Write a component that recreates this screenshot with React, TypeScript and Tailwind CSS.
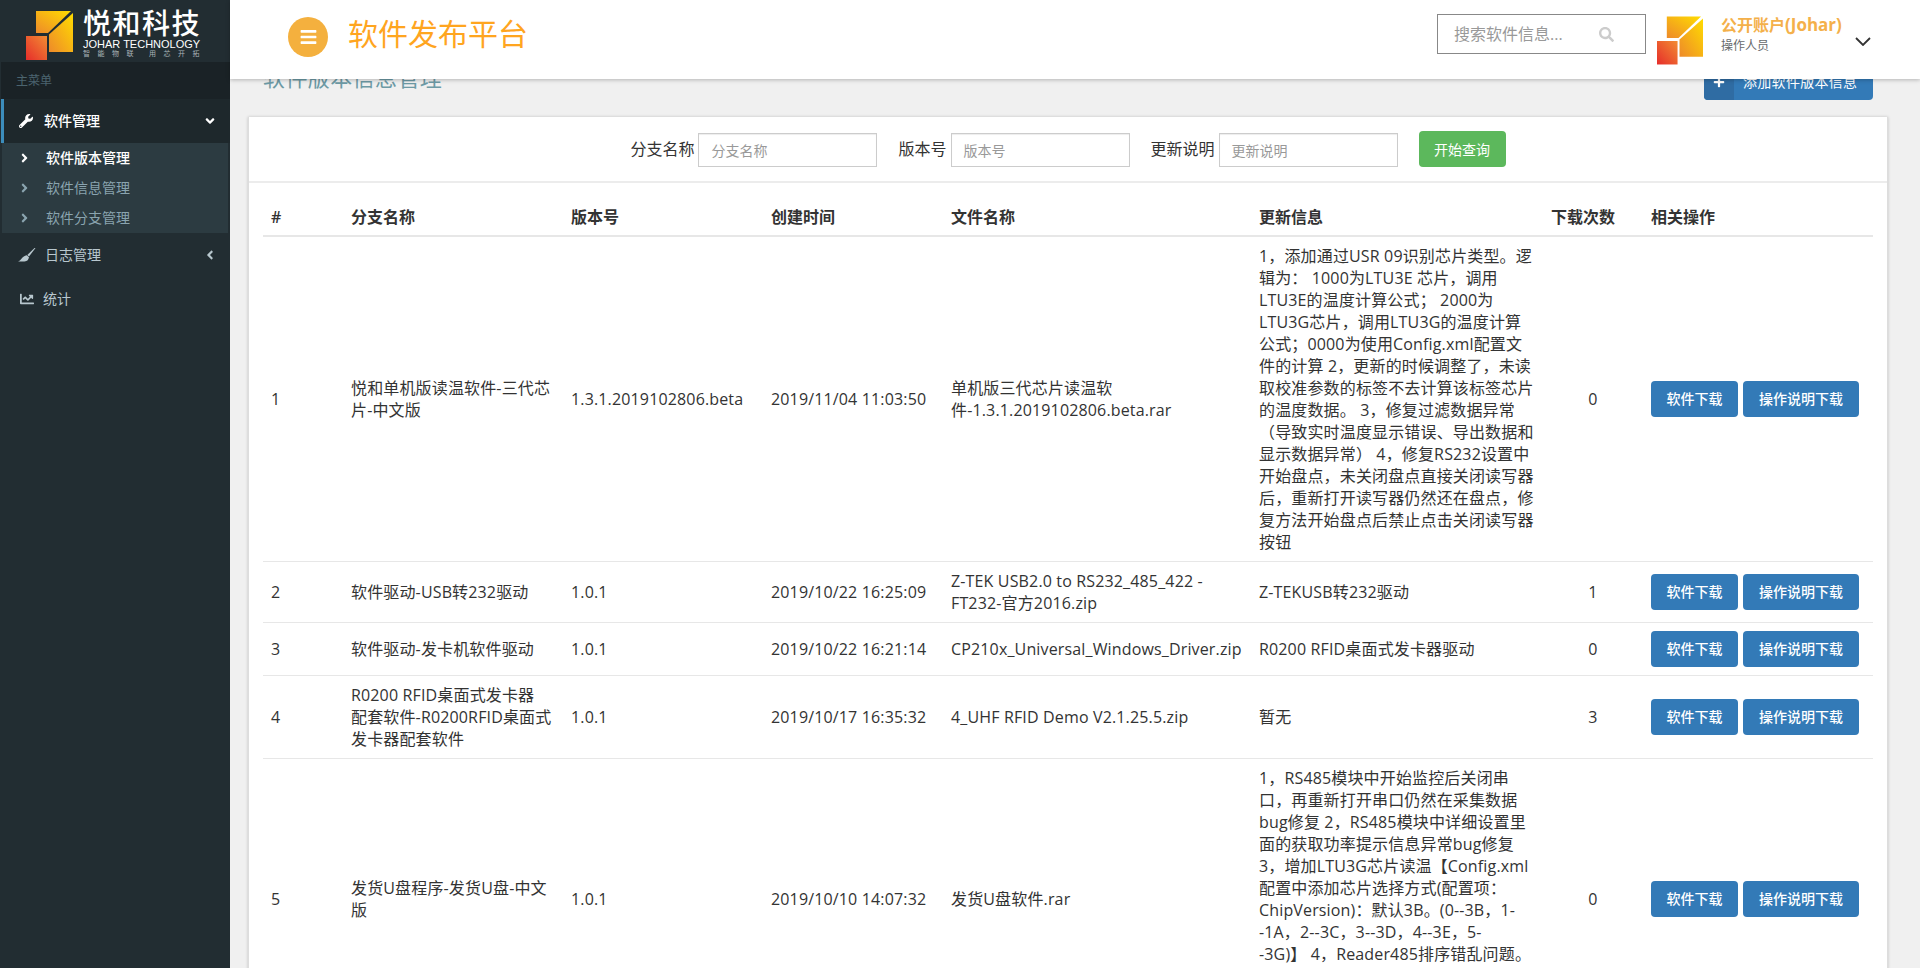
import { FaAngleDown, FaAngleLeft, FaAngleRight, FaBars, FaChartLine, FaPlus, FaSearch, FaWrench } from "react-icons/fa";

const rows = [
  {
    id: 1,
    branch: "悦和单机版读温软件-三代芯\n片-中文版",
    version: "1.3.1.2019102806.beta",
    created: "2019/11/04 11:03:50",
    file: "单机版三代芯片读温软\n件-1.3.1.2019102806.beta.rar",
    info: "1，添加通过USR 09识别芯片类型。逻\n辑为： 1000为LTU3E 芯片，调用\nLTU3E的温度计算公式； 2000为\nLTU3G芯片，调用LTU3G的温度计算\n公式；0000为使用Config.xml配置文\n件的计算 2，更新的时候调整了，未读\n取校准参数的标签不去计算该标签芯片\n的温度数据。 3，修复过滤数据异常\n（导致实时温度显示错误、导出数据和\n显示数据异常） 4，修复RS232设置中\n开始盘点，未关闭盘点直接关闭读写器\n后，重新打开读写器仍然还在盘点，修\n复方法开始盘点后禁止点击关闭读写器\n按钮",
    count: 0,
  },
  {
    id: 2,
    branch: "软件驱动-USB转232驱动",
    version: "1.0.1",
    created: "2019/10/22 16:25:09",
    file: "Z-TEK USB2.0 to RS232_485_422 -\nFT232-官方2016.zip",
    info: "Z-TEKUSB转232驱动",
    count: 1,
  },
  {
    id: 3,
    branch: "软件驱动-发卡机软件驱动",
    version: "1.0.1",
    created: "2019/10/22 16:21:14",
    file: "CP210x_Universal_Windows_Driver.zip",
    info: "R0200 RFID桌面式发卡器驱动",
    count: 0,
  },
  {
    id: 4,
    branch: "R0200 RFID桌面式发卡器\n配套软件-R0200RFID桌面式\n发卡器配套软件",
    version: "1.0.1",
    created: "2019/10/17 16:35:32",
    file: "4_UHF RFID Demo V2.1.25.5.zip",
    info: "暂无",
    count: 3,
  },
  {
    id: 5,
    branch: "发货U盘程序-发货U盘-中文\n版",
    version: "1.0.1",
    created: "2019/10/10 14:07:32",
    file: "发货U盘软件.rar",
    info: "1，RS485模块中开始监控后关闭串\n口，再重新打开串口仍然在采集数据\nbug修复 2，RS485模块中详细设置里\n面的获取功率提示信息异常bug修复\n3，增加LTU3G芯片读温【Config.xml\n配置中添加芯片选择方式(配置项：\nChipVersion)：默认3B。(0--3B，1-\n-1A，2--3C，3--3D，4--3E，5-\n-3G)】 4，Reader485排序错乱问题。",
    count: 0,
  },
];

const headers = ["#", "分支名称", "版本号", "创建时间", "文件名称", "更新信息", "下载次数", "相关操作"];

function LogoMark({ id, className }: { id: string; className: string }) {
  return (
    <svg viewBox="0 0 47 49" className={className}>
      <defs>
        <linearGradient id={`${id}-a`} x1="0" y1="1" x2="1" y2="0">
          <stop offset="0" stopColor="#ee8a2a" />
          <stop offset="1" stopColor="#ffdc00" />
        </linearGradient>
        <linearGradient id={`${id}-b`} x1="0" y1="1" x2="1" y2="0">
          <stop offset="0" stopColor="#e62d2b" />
          <stop offset="1" stopColor="#f28c32" />
        </linearGradient>
      </defs>
      <path d="M10 0H45L22 22H10Z" fill={`url(#${id}-a)`} />
      <path d="M23 23.500L47 2V41H23Z" fill={`url(#${id}-a)`} />
      <path d="M0 25H21V49H0Z" fill={`url(#${id}-b)`} />
    </svg>
  );
}

function BrushIcon() {
  return (
    <svg viewBox="0 0 18 14" className="mr-[9px] h-[14px] w-[18px]" fill="currentColor">
      <path d="M17.500 0L11 8.500L9.300 7L16.500 0Z" />
      <path d="M0 13.500C3.500 12.500 4 8 8.700 7.300L11 9.300C10.500 11.500 9.500 13.500 6.500 13.500Z" />
    </svg>
  );
}

function Sidebar() {
  return (
    <aside className="w-[230px] shrink-0 bg-[#222d32] text-[14px]">
      <div className="flex h-[62px] items-start pl-[26px] pt-[11px]">
        <LogoMark id="side" className="h-[49px] w-[47px]" />
        <div className="ml-[10px] -mt-[2px] text-white">
          <div className="text-[28px] leading-[29px] font-medium tracking-[1.5px] whitespace-nowrap">悦和科技</div>
          <div className="font-['Liberation_Sans',sans-serif] text-[11px] leading-[12px] whitespace-nowrap">JOHAR TECHNOLOGY</div>
          <div className="flex gap-[8px] text-[7px] leading-[8px] tracking-[7.5px] whitespace-nowrap text-[#aab4b8]">
            <span>智能物联</span>
            <span>用芯开拓</span>
          </div>
        </div>
      </div>
      <div className="ml-px flex h-[37px] items-center bg-[#1a2226] pl-[15px] text-[12px] text-[#4b646f]">主菜单</div>
      <div className="ml-px flex h-[44px] items-center border-l-[3px] border-[#3c8dbc] bg-[#1e282c] pl-[15px] pr-[13px] font-medium text-white">
        <FaWrench className="mr-[11px] h-[14px] w-[14px]" />
        <span className="flex-1 pb-[2px]">软件管理</span>
        <FaAngleDown className="h-[14px] w-[14px]" />
      </div>
      <div className="mx-[2px] flex h-[90px] flex-col bg-[#2c3b41]">
        <div className="flex h-[30px] items-center pl-[18px] font-medium text-white">
          <FaAngleRight className="mr-[17px] h-[14px] w-[9px]" />
          <span className="pb-[2px]">软件版本管理</span>
        </div>
        <div className="flex h-[30px] items-center pl-[18px] text-[#8aa4af]">
          <FaAngleRight className="mr-[17px] h-[14px] w-[9px]" />
          <span className="pb-[2px]">软件信息管理</span>
        </div>
        <div className="flex h-[30px] items-center pl-[18px] text-[#8aa4af]">
          <FaAngleRight className="mr-[17px] h-[14px] w-[9px]" />
          <span className="pb-[2px]">软件分支管理</span>
        </div>
      </div>
      <div className="flex h-[44px] items-center pl-[18px] pr-[13px] text-[#b8c7ce]">
        <BrushIcon />
        <span className="flex-1 pb-[2px]">日志管理</span>
        <FaAngleLeft className="h-[14px] w-[14px]" />
      </div>
      <div className="flex h-[44px] items-center pl-[19px] text-[#b8c7ce]">
        <FaChartLine className="mr-[8px] h-[14px] w-[16px]" />
        <span className="pb-[2px]">统计</span>
      </div>
    </aside>
  );
}

function TopBar() {
  return (
    <header className="absolute inset-x-0 top-0 z-10 flex h-[79px] items-start bg-white pl-[58px] pr-[49px] shadow-[0_1px_4px_rgba(0,0,0,0.25)]">
      <div className="mt-[17px] flex h-[40px] w-[40px] items-center justify-center rounded-full bg-[#f4b03e] text-white">
        <FaBars className="h-[18px] w-[17px]" />
      </div>
      <div className="ml-[20px] mt-[19px] text-[30px] leading-[30px] text-[#ffa51f]">软件发布平台</div>
      <div className="ml-auto mt-[14px] flex h-[40px] w-[209px] items-center justify-between border border-[#888] pl-[16px] pr-[31px] text-[16px] text-[#999]">
        <span>搜索软件信息...</span>
        <FaSearch className="h-[15px] w-[15px] text-[#ccc]" />
      </div>
      <LogoMark id="user" className="ml-[11px] mt-[16px] h-[49px] w-[46px]" />
      <div className="ml-[18px] mt-[14px] w-[134px]">
        <div className="text-[16px] leading-[22px] font-bold whitespace-nowrap text-[#f4b04a]">
          公开账户<span className="text-[17px]">(Johar)</span>
        </div>
        <div className="text-[12px] leading-[20px] text-[#676a6c]">操作人员</div>
      </div>
      <svg viewBox="0 0 16 9" className="mt-[37px] h-[9px] w-[16px]" fill="none" stroke="#333" strokeWidth="1.8">
        <path d="M1 1L8 8L15 1" />
      </svg>
    </header>
  );
}

function FilterField({ label }: { label: string }) {
  return (
    <div className="flex items-center gap-[4px]">
      <label className="pb-[3px] text-[16px] leading-[22px] text-[#333]">{label}</label>
      <div className="flex h-[34px] w-[179px] items-center border border-[#ccc] pl-[12px] text-[14px] text-[#999] shadow-[inset_0_1px_1px_rgba(0,0,0,0.075)]">{label}</div>
    </div>
  );
}

export default function App() {
  return (
    <div className="flex h-[968px] w-full overflow-hidden bg-[#f0f0f0] font-['Open_Sans','Noto_Sans_CJK_SC',sans-serif] text-[14px] text-[#333]">
      <Sidebar />
      <main className="relative min-w-0 flex-1">
        <TopBar />
        <div className="flex items-center justify-between pl-[33px] pr-[47px] pt-[66px]">
          <div className="-mt-[12px] text-[22px] leading-[24px] tracking-[0.4px] text-[#6d9aa5]">软件版本信息管理</div>
          <button className="flex h-[34px] w-[169px] items-center overflow-hidden rounded bg-[#337ab7] text-white">
            <span className="flex h-full w-[30px] items-center justify-center bg-[#2f6ca3] pb-[2px]">
              <FaPlus className="h-[12px] w-[12px]" />
            </span>
            <span className="pb-[4px] pl-[9px] tracking-[0.3px]">添加软件版本信息</span>
          </button>
        </div>
        <section className="ml-[18px] mr-[32px] mt-[17px] border-l border-r border-[#ddd] bg-white shadow-[0_0_3px_rgba(0,0,0,0.2)]">
          <div className="flex h-[66px] items-center justify-center gap-[21px] border-b-2 border-[#ececec] pt-[2px]">
            <FilterField label="分支名称" />
            <FilterField label="版本号" />
            <FilterField label="更新说明" />
            <button className="mb-[2px] h-[36px] w-[87px] rounded bg-[#5cb85c] text-white">开始查询</button>
          </div>
          <div className="px-[14px] pt-[15px]">
            <table className="w-full table-fixed border-collapse text-[16px] leading-[22px] tracking-[0.15px]">
              <colgroup>
                <col className="w-[80px]" />
                <col className="w-[220px]" />
                <col className="w-[200px]" />
                <col className="w-[180px]" />
                <col className="w-[308px]" />
                <col className="w-[292px]" />
                <col className="w-[100px]" />
                <col className="w-[230px]" />
              </colgroup>
              <thead>
                <tr className="border-b-2 border-[#e7e7e7]">
                  {headers.map((h) => (
                    <th key={h} className="px-2 pb-[7px] pt-2 text-left font-semibold tracking-normal">
                      {h}
                    </th>
                  ))}
                </tr>
              </thead>
              <tbody>
                {rows.map((row) => (
                  <tr key={row.id} className="border-b border-[#e7e7e7]">
                    <td className="p-2 align-middle">{row.id}</td>
                    <td className="p-2 align-middle whitespace-pre">{row.branch}</td>
                    <td className="p-2 align-middle">{row.version}</td>
                    <td className="p-2 align-middle">{row.created}</td>
                    <td className="p-2 align-middle whitespace-pre">{row.file}</td>
                    <td className="p-2 align-middle whitespace-pre">
                      <div className={row.id === 5 ? "h-[264px]" : ""}>{row.info}</div>
                    </td>
                    <td className="p-2 text-center align-middle">{row.count}</td>
                    <td className="p-2 align-middle text-[14px] tracking-normal whitespace-nowrap">
                      <button className="h-[36px] w-[87px] rounded bg-[#337ab7] font-medium text-white">软件下载</button>
                      <button className="ml-[5px] h-[36px] w-[116px] rounded bg-[#337ab7] font-medium text-white">操作说明下载</button>
                    </td>
                  </tr>
                ))}
              </tbody>
            </table>
          </div>
        </section>
      </main>
    </div>
  );
}
